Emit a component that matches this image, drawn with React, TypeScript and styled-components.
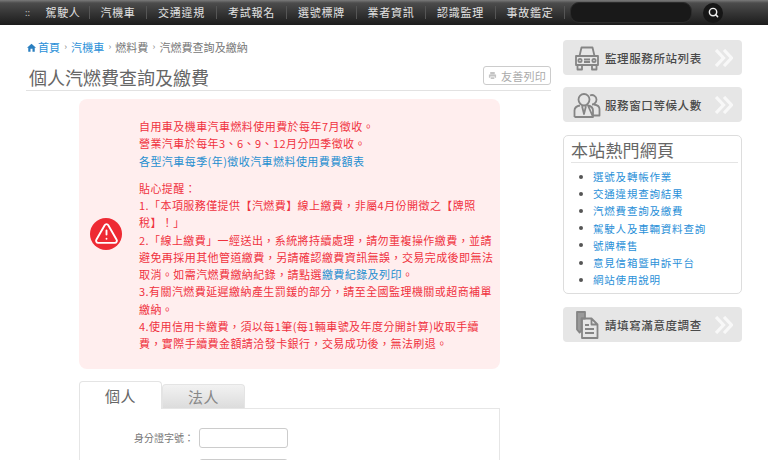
import React from "react";
import styled, { createGlobalStyle } from "styled-components";
import { Search, TriangleAlert } from "lucide-react";

const FONT = `"Noto Sans CJK TC", "Liberation Sans", sans-serif`;

const Global = createGlobalStyle`
  html, body { margin: 0; padding: 0; background: #fff; }
  body { font-family: ${FONT}; overflow: hidden; text-spacing-trim: space-all; }
  * { box-sizing: border-box; }
`;

const Page = styled.div`
  width: 768px;
  height: 460px;
  overflow: hidden;
`;

const NavBar = styled.nav`
  height: 25px;
  display: flex;
  align-items: center;
  padding-left: 25px;
  background: linear-gradient(#7a7a7a 0, #4c4c4c 3px, #333 14px, #1c1c1c 100%);
`;

const Dots = styled.span`
  color: #bbb;
  font-size: 9px;
  width: 12px;
  line-height: 1;
`;

const NavItem = styled.a<{ $width: number }>`
  width: ${(p) => p.$width}px;
  height: 13px;
  display: flex;
  align-items: center;
  justify-content: center;
  color: #e2e2e2;
  font-size: 11px;
  letter-spacing: 0.7px;
  line-height: 13px;
  white-space: nowrap;
  border-right: 1px solid #555;
`;

const SearchField = styled.div`
  width: 122px;
  height: 21px;
  margin-left: 5px;
  border-radius: 9px;
  background: #191919;
  border: 1px solid #2c2c2c;
`;

const SearchButton = styled.button`
  width: 20px;
  height: 20px;
  margin-left: 11px;
  padding: 0;
  border: 0;
  border-radius: 50%;
  background: #161616;
  color: #eee;
  display: flex;
  align-items: center;
  justify-content: center;
`;

const Body = styled.div`
  display: flex;
  align-items: flex-start;
  padding-left: 26px;
`;

const Main = styled.main`
  width: 525px;
  flex: none;
  padding-top: 15px;
`;

const Crumbs = styled.div`
  display: flex;
  align-items: center;
  height: 14px;
  padding-left: 1px;
  font-size: 11px;
  line-height: 14px;
  color: #777;
  letter-spacing: 0.05px;
  white-space: nowrap;
`;

const CrumbLink = styled.a`
  color: #2a90d8;
`;

const CrumbSep = styled.span`
  width: 11px;
  text-align: center;
  color: #888;
  font-size: 9px;
`;

const HomeIcon = styled.svg`
  width: 9px;
  height: 9px;
  margin-right: 2px;
  fill: #2a7fc0;
`;

const TitleRow = styled.div`
  display: flex;
  align-items: center;
  justify-content: space-between;
  height: 30px;
  margin-top: 7px;
  padding: 3px 0 0 3px;
  border-bottom: 1px solid #e2e2e2;
`;

const Title = styled.h1`
  margin: 0;
  font-size: 18px;
  font-weight: 400;
  line-height: 24px;
  color: #666;
  white-space: nowrap;
`;

const PrintButton = styled.a`
  width: 68px;
  height: 19px;
  margin-bottom: 3px;
  display: flex;
  align-items: center;
  justify-content: center;
  gap: 4px;
  border: 1px solid #ccc;
  border-radius: 3px;
  font-size: 11px;
  color: #aaa;
  letter-spacing: 0.3px;
  white-space: nowrap;
`;

const PrintIcon = styled.svg`
  width: 9px;
  height: 9px;
  fill: #c4c4c4;
`;

const Alert = styled.section`
  width: 421px;
  height: 270px;
  margin: 8px 0 0 53px;
  padding: 19px 0 0 60px;
  position: relative;
  background: #ffeeee;
  border-radius: 8px;
`;

const AlertIcon = styled.div`
  position: absolute;
  left: 11px;
  top: 119px;
  width: 32px;
  height: 32px;
  padding-bottom: 1px;
  border-radius: 50%;
  background: #ee2a33;
  color: #fff;
  display: flex;
  align-items: center;
  justify-content: center;
`;

const AlertBlock = styled.div`
  font-size: 11px;
  line-height: 17.25px;
  letter-spacing: 0.43px;
  color: #f0323e;
  white-space: nowrap;
`;

const Reminder = styled(AlertBlock)`
  margin-top: 10px;
`;

const AlertLink = styled.a`
  color: #1f8fd0;
`;

const Line = styled.div``;

const TabBar = styled.div`
  display: flex;
  align-items: flex-end;
  height: 27px;
  margin: 12px 0 0 53px;
`;

const Tab = styled.div<{ $active?: boolean }>`
  width: 83px;
  height: ${(p) => (p.$active ? 28 : 24)}px;
  margin-bottom: ${(p) => (p.$active ? -1 : 0)}px;
  position: relative;
  display: flex;
  align-items: center;
  justify-content: center;
  font-size: 15px;
  letter-spacing: 0.5px;
  color: ${(p) => (p.$active ? "#666" : "#888")};
  border-radius: 4px 4px 0 0;
  border: 1px solid #e4e4e4;
  border-bottom: 0;
  background: ${(p) => (p.$active ? "#fff" : "linear-gradient(#f2f2f2, #dcdcdc)")};
`;

const Panel = styled.div`
  width: 421px;
  height: 60px;
  margin-left: 53px;
  padding-top: 19px;
  border: 1px solid #e6e6e6;
  border-bottom: 0;
`;

const FormRow = styled.div`
  display: flex;
  align-items: center;
  height: 20px;
  margin-bottom: 11px;
`;

const Label = styled.label`
  width: 114px;
  margin-top: -2px;
  text-align: right;
  font-size: 10px;
  color: #777;
  white-space: nowrap;
`;

const Input = styled.div`
  width: 89px;
  height: 20px;
  margin-left: 5px;
  border: 1px solid #ccc;
  border-radius: 3px;
  background: #fff;
`;

const Side = styled.aside`
  width: 179px;
  flex: none;
  margin-left: 12px;
  padding-top: 15px;
`;

const SideButton = styled.a<{ $gap?: number }>`
  height: 35px;
  margin-bottom: ${(p) => p.$gap ?? 12}px;
  padding: 0 9px 0 10px;
  display: flex;
  align-items: center;
  border-radius: 4px;
  background: #e6e6e6;
  color: #4a4a4a;
  font-size: 11.5px;
  font-weight: 500;
  letter-spacing: 0.6px;
  white-space: nowrap;
`;

const SideIcon = styled.svg`
  flex: none;
  width: 28px;
  height: 28px;
  margin-right: 4px;
  fill: none;
  stroke: #858585;
  stroke-width: 1.8;
  stroke-linejoin: round;
`;

const SideLabel = styled.span`
  flex: 1;
`;

const Chevrons = styled.svg`
  flex: none;
  width: 18px;
  height: 18px;
  fill: none;
  stroke: #f8f8f8;
  stroke-width: 3.2;
`;

const HotBox = styled.div`
  height: 159px;
  margin: 13px 0 13px;
  padding: 0 3px 0 7px;
  background: #fff;
  border: 1px solid #ddd;
  border-radius: 5px;
`;

const HotTitle = styled.h2`
  margin: 0;
  height: 27px;
  font-size: 17px;
  font-weight: 400;
  line-height: 27px;
  letter-spacing: 0.2px;
  color: #666;
  border-bottom: 1px solid #e4e4e4;
  white-space: nowrap;
`;

const HotList = styled.ul`
  margin: 5px 0 0;
  padding: 0 0 0 8px;
  list-style: none;
`;

const HotItem = styled.li`
  display: flex;
  align-items: center;
  height: 17.2px;
  gap: 10px;
  font-size: 10.5px;
  letter-spacing: 0.8px;
  color: #2a90d8;
  white-space: nowrap;
  &::before {
    content: "";
    width: 4px;
    height: 4px;
    border-radius: 50%;
    background: #555;
    flex: none;
  }
`;

const nav = [
  ["駕駛人", 53],
  ["汽機車", 57],
  ["交通違規", 70],
  ["考試報名", 70],
  ["選號標牌", 70],
  ["業者資訊", 69],
  ["認識監理", 70],
  ["事故鑑定", 69],
] as const;

const hot = [
  "選號及轉帳作業",
  "交通違規查詢結果",
  "汽燃費查詢及繳費",
  "駕駛人及車輛資料查詢",
  "號牌標售",
  "意見信箱暨申訴平台",
  "網站使用說明",
];

const DoubleChevron = () => (
  <Chevrons viewBox="0 0 18 18">
    <path d="M1 1l7.500 8L1 17M9 1l7.500 8L9 17" />
  </Chevrons>
);

export default function App() {
  return (
    <Page>
      <Global />
      <NavBar>
        <Dots>::</Dots>
        {nav.map(([label, width]) => (
          <NavItem key={label} $width={width}>
            {label}
          </NavItem>
        ))}
        <SearchField />
        <SearchButton aria-label="搜尋">
          <Search size={11} strokeWidth={3.2} />
        </SearchButton>
      </NavBar>
      <Body>
        <Main>
          <Crumbs>
            <HomeIcon viewBox="0 0 10 10">
              <path d="M5 .8 0 5.200h1.400V9.600h2.500V6.500h2.200v3.100h2.500V5.200H10z" />
            </HomeIcon>
            <CrumbLink>首頁</CrumbLink>
            <CrumbSep>›</CrumbSep>
            <CrumbLink>汽機車</CrumbLink>
            <CrumbSep>›</CrumbSep>
            <span>燃料費</span>
            <CrumbSep>›</CrumbSep>
            <span>汽燃費查詢及繳納</span>
          </Crumbs>
          <TitleRow>
            <Title>個人汽燃費查詢及繳費</Title>
            <PrintButton>
              <PrintIcon viewBox="0 0 10 10">
                <path d="M2.500 1h5v2.500h-5zM1 4h8v3.500H7.500V6h-5v1.500H1zM3 7h4v2H3z" />
              </PrintIcon>
              友善列印
            </PrintButton>
          </TitleRow>
          <Alert>
            <AlertIcon>
              <TriangleAlert size={25} strokeWidth={1.8} />
            </AlertIcon>
            <AlertBlock>
              <Line>自用車及機車汽車燃料使用費於每年7月徵收。</Line>
              <Line>營業汽車於每年3、6、9、12月分四季徵收。</Line>
              <Line>
                <AlertLink>各型汽車每季(年)徵收汽車燃料使用費費額表</AlertLink>
              </Line>
            </AlertBlock>
            <Reminder>
              <Line>貼心提醒：</Line>
              <Line>1.「本項服務僅提供【汽燃費】線上繳費，非屬4月份開徵之【牌照</Line>
              <Line>稅】！」</Line>
              <Line>2.「線上繳費」一經送出，系統將持續處理，請勿重複操作繳費，並請</Line>
              <Line>避免再採用其他管道繳費，另請確認繳費資訊無誤，交易完成後即無法</Line>
              <Line>
                取消。如需汽燃費繳納紀錄，請點選<AlertLink>繳費紀錄及列印</AlertLink>。
              </Line>
              <Line>3.有關汽燃費延遲繳納產生罰鍰的部分，請至全國監理機關或超商補單</Line>
              <Line>繳納。</Line>
              <Line>4.使用信用卡繳費，須以每1筆(每1輛車號及年度分開計算)收取手續</Line>
              <Line>費，實際手續費金額請洽發卡銀行，交易成功後，無法刷退。</Line>
            </Reminder>
          </Alert>
          <TabBar>
            <Tab $active>個人</Tab>
            <Tab>法人</Tab>
          </TabBar>
          <Panel>
            <FormRow>
              <Label>身分證字號：</Label>
              <Input />
            </FormRow>
            <FormRow>
              <Label />
              <Input />
            </FormRow>
          </Panel>
        </Main>
        <Side>
          <SideButton>
            <SideIcon viewBox="0 0 28 28">
              <path d="M6.500 12 8.500 3.500h11l2 8.500M3 12h22v9H3zM4.500 21v4.500h4.500V21M19 21v4.500h4.500V21M11 15.500h6M11 18h6" />
              <circle cx="7" cy="16.500" r="1.600" />
              <circle cx="21" cy="16.500" r="1.600" />
            </SideIcon>
            <SideLabel>監理服務所站列表</SideLabel>
            <DoubleChevron />
          </SideButton>
          <SideButton $gap={0}>
            <SideIcon viewBox="0 0 28 28">
              <path d="M5.500 8.500a5.500 5.500 0 1 1 11 0c0 3-2.500 6-5.500 6s-5.500-3-5.500-6zM1.500 26v-6.500c0-3 3-4.500 5.500-5M15 14.500c2.500.5 5 2 5 5V26zM1.500 26H20M9 15l2 8 2-8" />
              <path d="M17 4.500a4.500 4.500 0 0 1 6.500 4c0 2.500-2 5-4.500 5M21 13.500c3 .5 5.500 1.500 5.500 4.500v6.500H20" />
            </SideIcon>
            <SideLabel>服務窗口等候人數</SideLabel>
            <DoubleChevron />
          </SideButton>
          <HotBox>
            <HotTitle>本站熱門網頁</HotTitle>
            <HotList>
              {hot.map((item) => (
                <HotItem key={item}>{item}</HotItem>
              ))}
            </HotList>
          </HotBox>
          <SideButton>
            <SideIcon viewBox="0 0 28 28">
              <path d="M4 1h8v6.500H8.500v12l-2 2-2.500-3z" fill="#9a9a9a" />
              <path d="M9 7.500h9.500l6 6V27H9zM18.500 7.500v6h6M12 14h4M12 18h9M12 22h9" />
            </SideIcon>
            <SideLabel>請填寫滿意度調查</SideLabel>
            <DoubleChevron />
          </SideButton>
        </Side>
      </Body>
    </Page>
  );
}
